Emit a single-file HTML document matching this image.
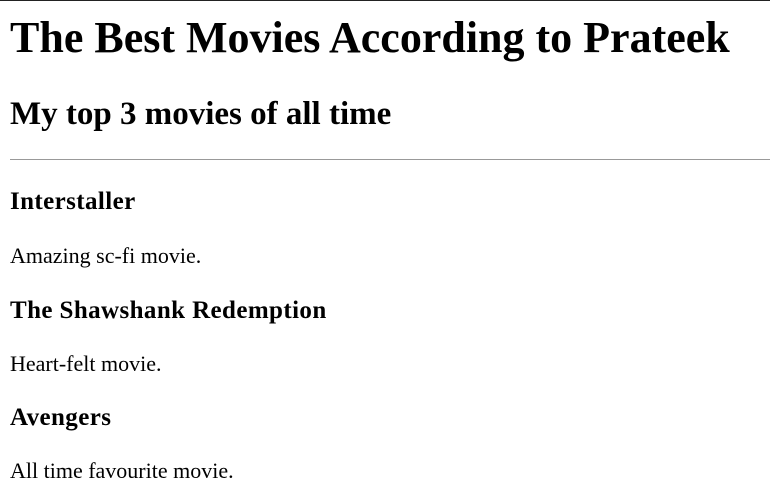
<!DOCTYPE html>
<html><head><style>
html,body{margin:0;padding:0;background:#fff;}
body{width:770px;height:489px;overflow:hidden;font-family:"Liberation Serif",serif;color:#000;border-top:1px solid #222;box-sizing:border-box;}
h1,h2,h4,p{margin:0;padding:0 0 0 10px;line-height:1.15;white-space:nowrap;}
h1{font-size:44px;font-weight:bold;margin-top:12px;}
h2{font-size:33px;font-weight:bold;margin-top:32px;}
hr{margin:25px 0 0 10px;border:0;border-top:1px solid #999;height:0;}
h4{font-size:25px;font-weight:bold;letter-spacing:0.4px;}
p{font-size:22px;}
</style></head><body>
<h1>The Best Movies According to Prateek</h1>
<h2>My top 3 movies of all time</h2>
<hr>
<h4 style="margin-top:28px">Interstaller</h4>
<p style="margin-top:27px">Amazing sc-fi movie.</p>
<h4 style="margin-top:28px">The Shawshank Redemption</h4>
<p style="margin-top:26px">Heart-felt movie.</p>
<h4 style="margin-top:27px">Avengers</h4>
<p style="margin-top:26px">All time favourite movie.</p>
</body></html>
